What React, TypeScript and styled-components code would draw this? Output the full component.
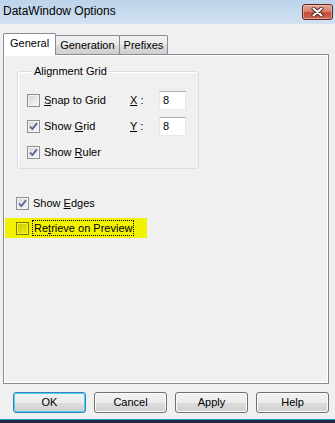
import React from "react"
import styled, { createGlobalStyle } from "styled-components"

const GlobalStyle = createGlobalStyle`
  html, body {
    margin: 0;
    padding: 0;
    background: #f0f0f0;
  }
  body {
    font-family: "Liberation Sans", Arial, sans-serif;
    font-size: 11px;
    color: #000;
  }
`

const Window = styled.div`
  width: 335px;
  height: 423px;
  display: flex;
  flex-direction: column;
  background: #f0f0f0;
  overflow: hidden;
`

const TitleBar = styled.div`
  height: 24px;
  flex-shrink: 0;
  display: flex;
  justify-content: space-between;
  background: linear-gradient(to bottom, #bcd3ea 0%, #c9dcef 60%, #d3e2f1 100%);
`

const Title = styled.span`
  font-size: 12px;
  line-height: 22px;
  padding-left: 3px;
  color: #000;
`

const CloseButton = styled.div`
  width: 31px;
  height: 16px;
  margin: 4px 2px 0 0;
  box-sizing: border-box;
  border: 1px solid #5c2424;
  border-radius: 3px;
  background: linear-gradient(to bottom, #e6a696 0%, #d6826f 45%, #c24a36 55%, #cf6b55 100%);
  box-shadow: inset 0 0 0 1px rgba(255, 210, 200, 0.5);
  display: flex;
  align-items: center;
  justify-content: center;
`

const TabRow = styled.div`
  display: flex;
  align-items: flex-end;
  margin-top: 8px;
  padding-left: 3px;
  height: 22px;
`

const Tab = styled.div<{ $active?: boolean }>`
  box-sizing: border-box;
  border: 1px solid #898c95;
  border-bottom: none;
  border-radius: 2px 2px 0 0;
  margin-left: -1px;
  &:first-child {
    margin-left: 0;
  }
  ${({ $active }) =>
    $active
      ? `
    height: 22px;
    margin-bottom: -1px;
    padding: 0 6px;
    background: #ffffff;
    line-height: 18px;
    position: relative;
    z-index: 1;
  `
      : `
    height: 19px;
    padding: 0 4px;
    background: linear-gradient(to bottom, #f2f2f2 0%, #ebebeb 50%, #dddddd 51%, #cfcfcf 100%);
    line-height: 18px;
  `}
`

const Panel = styled.div`
  box-sizing: border-box;
  width: 326px;
  height: 330px;
  margin-left: 3px;
  flex-shrink: 0;
  border: 1px solid #898c95;
  box-shadow: inset 1px 1px 0 #ffffff, inset -1px -1px 0 #ffffff;
  background: #f0f0f0;
  display: flex;
  flex-direction: column;
`

const GroupBox = styled.fieldset`
  box-sizing: border-box;
  width: 182px;
  height: 104px;
  margin: 10px 0 0 13px;
  padding: 9px 0 0 9px;
  border: 1px solid #d5dfe5;
  border-radius: 3px;
  box-shadow: inset 1px 1px 0 #ffffff;
`

const Legend = styled.legend`
  padding: 0 2px;
  margin-left: 5px;
  line-height: 13px;
`

const GridRows = styled.div`
  display: grid;
  grid-template-columns: 103px 29px 27px;
  grid-auto-rows: 26px;
  align-items: center;
`

const CheckRow = styled.label<{ $highlight?: boolean }>`
  display: flex;
  align-items: center;
  gap: 4px;
  height: 20px;
  white-space: nowrap;
  ${({ $highlight }) =>
    $highlight &&
    `
    background: #f2f200;
  `}
`

const StandaloneRow = styled(CheckRow)<{ $top: number }>`
  width: 142px;
  margin: ${({ $top }) => $top}px 0 0 1px;
  padding-left: 11px;
  box-sizing: border-box;
`

const Box = styled.span<{ $tint?: boolean }>`
  box-sizing: border-box;
  width: 13px;
  height: 13px;
  flex-shrink: 0;
  border: 1px solid ${({ $tint }) => ($tint ? "#7a7a10" : "#8e8f8f")};
  background: ${({ $tint }) =>
    $tint
      ? "linear-gradient(135deg, #c8c800 0%, #eeee10 100%)"
      : "linear-gradient(135deg, #d6d6d6 0%, #f6f6f6 100%)"};
  box-shadow: inset 0 0 0 1px ${({ $tint }) => ($tint ? "#f4f430" : "#f4f4f4")};
  display: flex;
  align-items: center;
  justify-content: center;
`

const FocusText = styled.span`
  outline: 1px dotted #000;
  padding: 0 1px;
  line-height: 14px;
`

const Key = styled.u`
  text-decoration-thickness: 1px;
  text-underline-offset: 1px;
`

const AxisLabel = styled.span`
  white-space: pre;
`

const NumberInput = styled.div`
  box-sizing: border-box;
  width: 27px;
  height: 19px;
  background: #fff;
  border: 1px solid #e3e9ef;
  border-top-color: #abadb3;
  padding-left: 3px;
  line-height: 17px;
`

const ButtonRow = styled.div`
  display: flex;
  gap: 8px;
  padding-left: 13px;
  margin-top: 8px;
`

const Button = styled.div<{ $default?: boolean }>`
  box-sizing: border-box;
  width: 73px;
  height: 21px;
  border: 1px solid ${({ $default }) => ($default ? "#3c7fb1" : "#707070")};
  border-radius: 3px;
  background: linear-gradient(to bottom, #f2f2f2 0%, #ebebeb 50%, #dddddd 51%, #cfcfcf 100%);
  box-shadow: inset 0 0 0 1px ${({ $default }) => ($default ? "#48d4f8" : "#fbfbfb")};
  text-align: center;
  line-height: 19px;
`

const Spacer = styled.div`
  flex: 1;
`

const BottomEdge = styled.div`
  height: 3px;
  flex-shrink: 0;
  border-top: 1px solid #2f9bd0;
  background: #1d2b3c;
`

const CheckMark = () => (
  <svg width="9" height="9" viewBox="0 0 9 9">
    <path d="M1 4.5 L3.4 7 L8 1.2" fill="none" stroke="#4a5d94" strokeWidth="1.8" />
  </svg>
)

const CloseGlyph = () => (
  <svg width="13" height="10" viewBox="0 0 13 10">
    <path d="M2.5 1.5 L10.5 8.5 M10.5 1.5 L2.5 8.5" stroke="#4a2020" strokeWidth="4" strokeLinecap="round" />
    <path d="M2.5 1.5 L10.5 8.5 M10.5 1.5 L2.5 8.5" stroke="#ffffff" strokeWidth="2.2" strokeLinecap="round" />
  </svg>
)

const Check: React.FC<{ checked?: boolean; tint?: boolean }> = ({ checked, tint }) => (
  <Box $tint={tint}>{checked && <CheckMark />}</Box>
)

export default function App() {
  return (
    <>
      <GlobalStyle />
      <Window>
        <TitleBar>
          <Title>DataWindow Options</Title>
          <CloseButton>
            <CloseGlyph />
          </CloseButton>
        </TitleBar>

        <TabRow>
          <Tab $active>General</Tab>
          <Tab>Generation</Tab>
          <Tab>Prefixes</Tab>
        </TabRow>

        <Panel>
          <GroupBox>
            <Legend>Alignment Grid</Legend>
            <GridRows>
              <CheckRow>
                <Check />
                <span>
                  <Key>S</Key>nap to Grid
                </span>
              </CheckRow>
              <AxisLabel>
                <Key>X</Key> :
              </AxisLabel>
              <NumberInput>8</NumberInput>

              <CheckRow>
                <Check checked />
                <span>
                  Show <Key>G</Key>rid
                </span>
              </CheckRow>
              <AxisLabel>
                <Key>Y</Key> :
              </AxisLabel>
              <NumberInput>8</NumberInput>

              <CheckRow>
                <Check checked />
                <span>
                  Show <Key>R</Key>uler
                </span>
              </CheckRow>
            </GridRows>
          </GroupBox>

          <StandaloneRow $top={24}>
            <Check checked />
            <span>
              Show <Key>E</Key>dges
            </span>
          </StandaloneRow>

          <StandaloneRow $top={5} $highlight>
            <Check tint />
            <FocusText>
              Re<Key>t</Key>rieve on Preview
            </FocusText>
          </StandaloneRow>
        </Panel>

        <ButtonRow>
          <Button $default>OK</Button>
          <Button>Cancel</Button>
          <Button>Apply</Button>
          <Button>Help</Button>
        </ButtonRow>
        <Spacer />
        <BottomEdge />
      </Window>
    </>
  )
}
